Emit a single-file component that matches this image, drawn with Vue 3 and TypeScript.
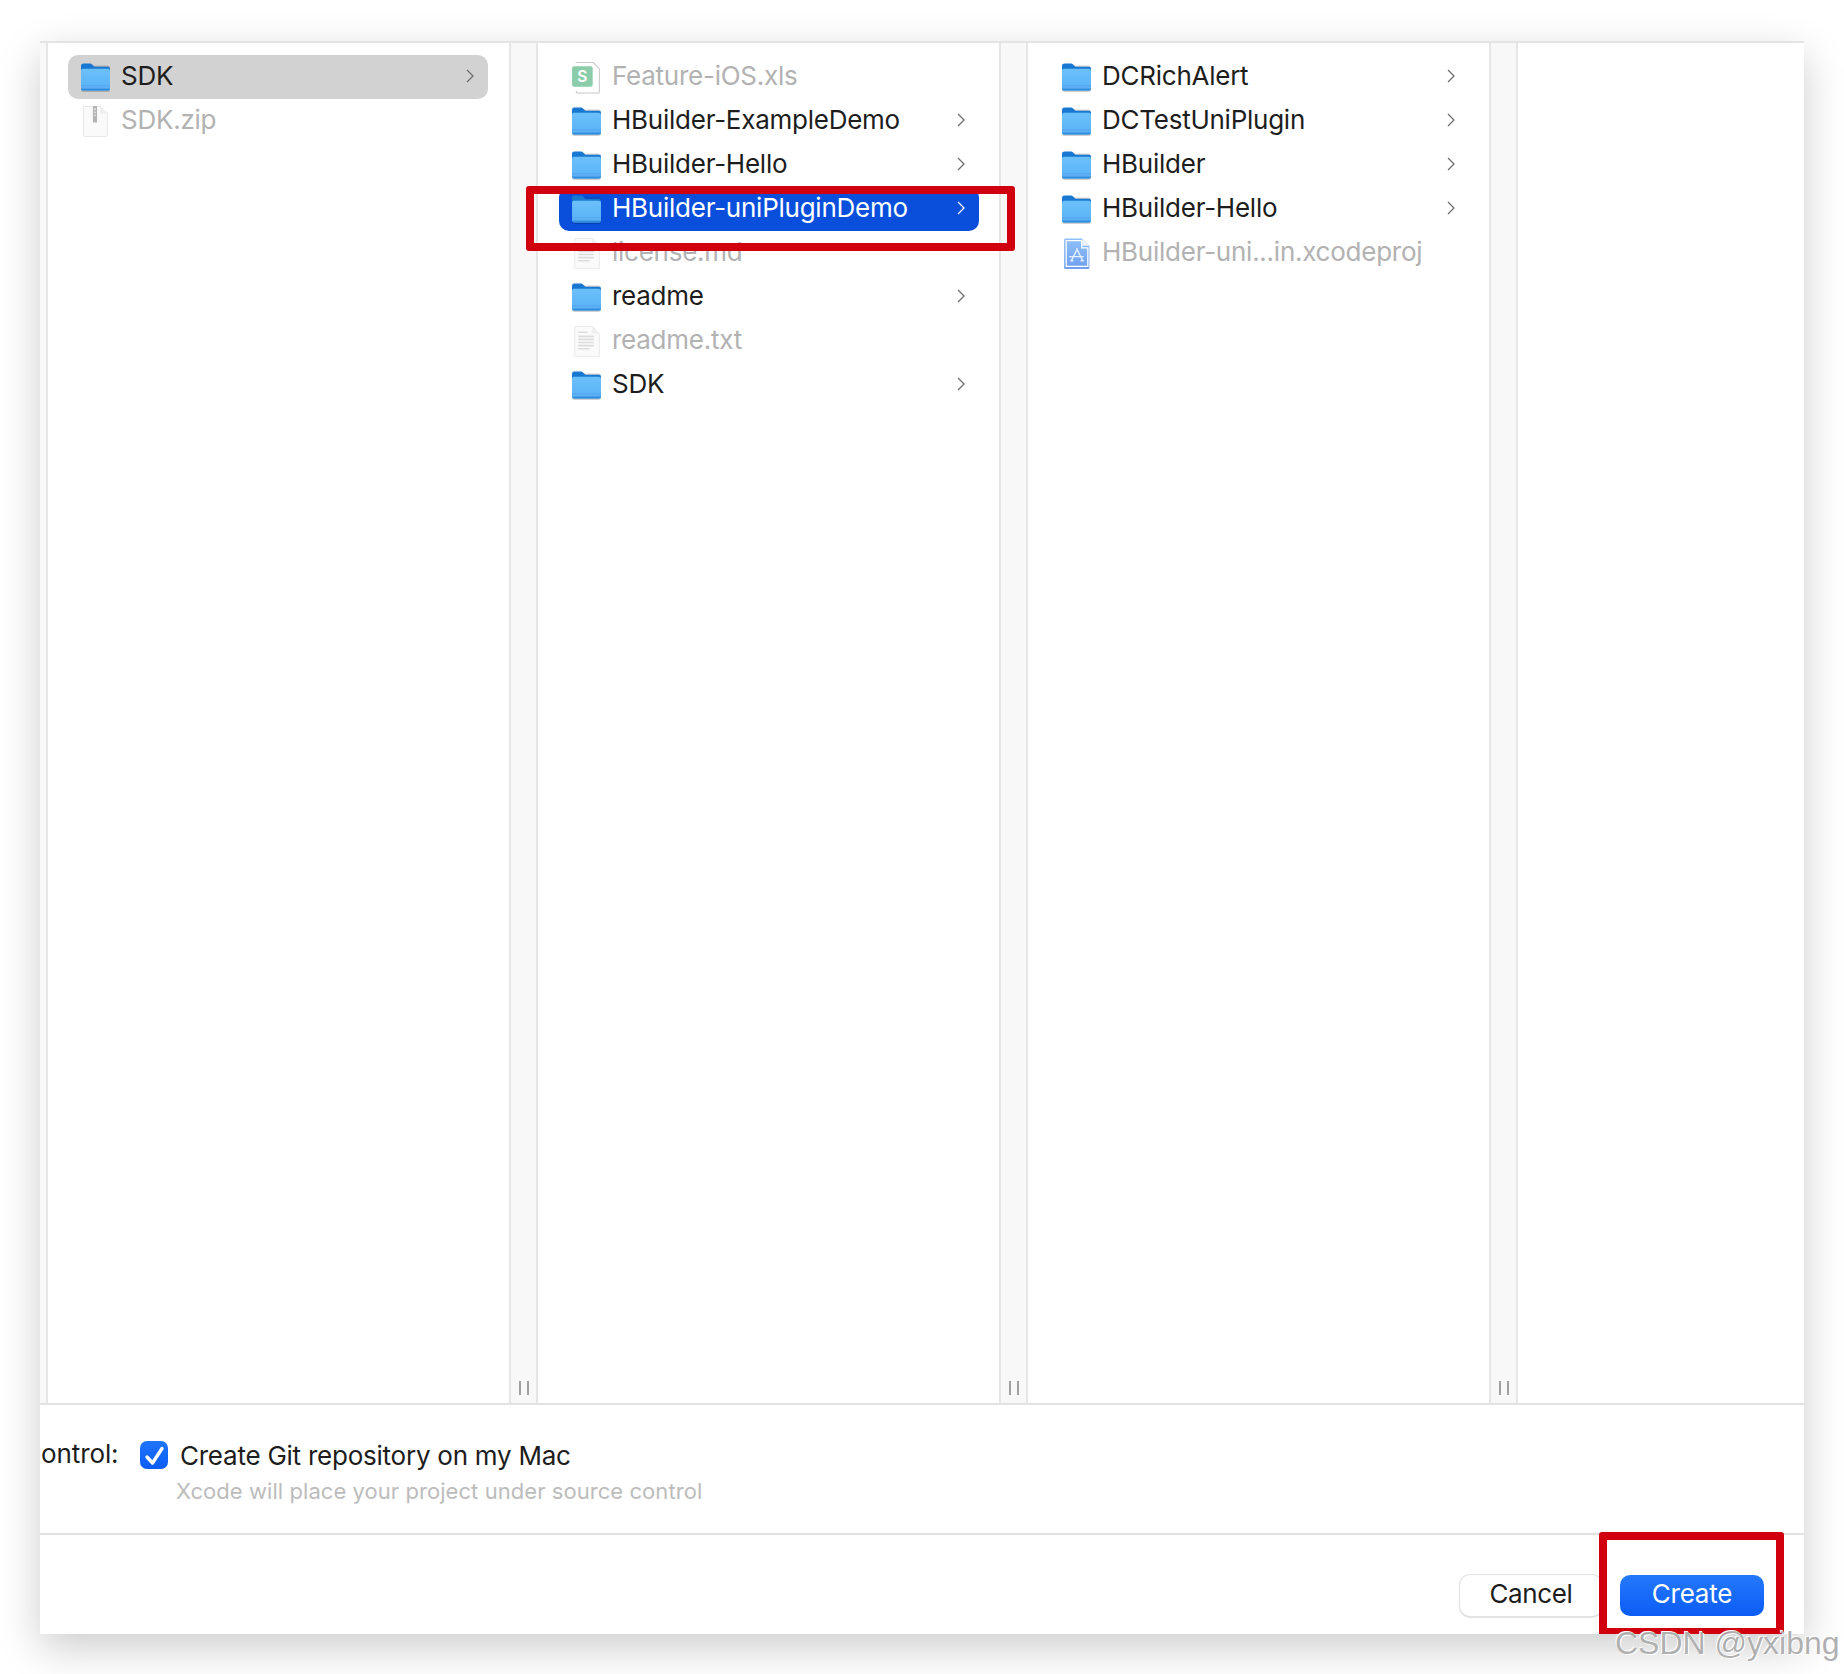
<script setup lang="ts">
interface Row {
  name: string
  icon: string
  dir?: boolean
  state?: 'gray' | 'blue'
}

const columns: Row[][] = [
  [
    { name: 'SDK', icon: 'folder', dir: true, state: 'gray' },
    { name: 'SDK.zip', icon: 'zip' },
  ],
  [
    { name: 'Feature-iOS.xls', icon: 'xls' },
    { name: 'HBuilder-ExampleDemo', icon: 'folder', dir: true },
    { name: 'HBuilder-Hello', icon: 'folder', dir: true },
    { name: 'HBuilder-uniPluginDemo', icon: 'folder', dir: true, state: 'blue' },
    { name: 'license.md', icon: 'doc' },
    { name: 'readme', icon: 'folder', dir: true },
    { name: 'readme.txt', icon: 'doc' },
    { name: 'SDK', icon: 'folder', dir: true },
  ],
  [
    { name: 'DCRichAlert', icon: 'folder', dir: true },
    { name: 'DCTestUniPlugin', icon: 'folder', dir: true },
    { name: 'HBuilder', icon: 'folder', dir: true },
    { name: 'HBuilder-Hello', icon: 'folder', dir: true },
    { name: 'HBuilder-uni...in.xcodeproj', icon: 'proj' },
  ],
]
</script>

<template>
  <div class="page">
    <svg class="defs" width="0" height="0" aria-hidden="true">
      <defs>
        <linearGradient id="fbody" x1="0" y1="0" x2="0" y2="1">
          <stop offset="0" stop-color="#6cc0fb" />
          <stop offset="1" stop-color="#58b2f6" />
        </linearGradient>
        <linearGradient id="ptick" x1="0" y1="0" x2="0" y2="1">
          <stop offset="0" stop-color="#8fc0f6" />
          <stop offset="1" stop-color="#6f9ff0" />
        </linearGradient>
        <symbol id="folder" viewBox="0 0 30 29">
          <rect x="1" y="3" width="28" height="25.500" rx="2" fill="#000" opacity=".18" />
          <path d="M1 3.200C1 1.900 1.900 1 3.200 1h6.600c.8 0 1.300.3 1.900.8L13.900 4H27c1.200 0 2 .8 2 2v4H1z" fill="#1877d1" />
          <path d="M1 8c0-1.200.8-2 2-2h24c1.200 0 2 .8 2 2v17.200c0 1-.8 1.800-1.800 1.800H2.800C1.800 27 1 26.200 1 25.200z" fill="url(#fbody)" />
          <path d="M1 22h28v3.400H1z" fill="#4fa8ef" />
          <path d="M1 23.700h28" stroke="#73bdf6" stroke-width=".7" />
          <path d="M1 25.400h28c0 1-.8 1.600-1.800 1.600H2.800c-1 0-1.800-.6-1.800-1.600z" fill="#2f8bdb" />
        </symbol>
        <symbol id="zip" viewBox="0 0 30 32">
          <path d="M3.500 1.500h16l7 7v20.500c0 1-.6 1.500-1.500 1.500H5c-1 0-1.500-.5-1.500-1.500z" fill="#fafafa" stroke="#e9e9e9" />
          <path d="M19.500 1.500v7h7z" fill="#efefef" />
          <rect x="12.500" y="1" width="4" height="16" fill="#b4b4b4" />
          <path d="M13.500 4h2M13.500 7h2M13.500 10h2" stroke="#eee" />
        </symbol>
        <symbol id="xls" viewBox="0 0 30 32">
          <path d="M4.500 1.500h17l6 6v21.500c0 1.200-.8 2-2 2H7c-1.200 0-2-.8-2-2" fill="#fff" stroke="#c8c8c8" />
          <rect x="1" y="5" width="20" height="20" rx="2" fill="#8bcdab" />
          <text x="11" y="20" text-anchor="middle" class="sym-s">S</text>
        </symbol>
        <symbol id="doc" viewBox="0 0 30 32">
          <path d="M3.500 1.500h17l7 7v20.500c0 1-.6 1.500-1.500 1.500H5c-1 0-1.500-.5-1.500-1.500z" fill="#fafafa" stroke="#ececec" />
          <path d="M20.500 1.500v7h7z" fill="#efefef" />
          <path d="M7 7h9M7 11h15M7 14h15M7 17h15M7 20h15M7 23h11" stroke="#dcdcdc" stroke-width="1.600" />
        </symbol>
        <symbol id="proj" viewBox="0 0 30 32">
          <path d="M3 3c0-1 .6-1.500 1.500-1.500h16l7 7v21c0 1-.6 1.500-1.500 1.500H4.500c-1 0-1.500-.5-1.500-1.500z" fill="url(#ptick)" />
          <path d="M5 3.500h15v7h6v18H5z" fill="none" stroke="#fff" stroke-width="1.200" />
          <path d="M20.500 1.500v7h7z" fill="#eef3fb" />
          <path d="M10 23l6-12M21 23l-6-12M8 19h14M9 23h3M19 23h3" fill="none" stroke="#e6f0ff" stroke-width="1.300" />
        </symbol>
      </defs>
    </svg>

    <div class="window">
      <div class="browser">
        <div class="stub" />
        <template v-for="(col, c) in columns" :key="c">
          <div class="column" :class="{ first: c === 0 }">
            <div v-for="row in col" :key="row.name" class="row" :class="row.state">
              <svg class="icon"><use :href="'#' + row.icon" /></svg>
              <span class="name" :class="{ dim: !row.dir }">{{ row.name }}</span>
              <svg v-if="row.dir" class="chev" viewBox="0 0 8 14">
                <path d="M1 1l6 6-6 6" fill="none" stroke="currentColor" stroke-width="1.300" />
              </svg>
            </div>
          </div>
          <div class="divider"><span class="grip" /></div>
        </template>
        <div class="empty" />
      </div>

      <div class="source">
        <span class="label">ontrol:</span>
        <div class="opt">
          <div class="check-row">
            <span class="checkbox">
              <svg viewBox="0 0 28 28" class="tick">
                <path d="M7 16l5.500 6L22 7.500" fill="none" stroke="#fff" stroke-width="3.400" stroke-linecap="round" stroke-linejoin="round" />
              </svg>
            </span>
            <span class="opt-title">Create Git repository on my Mac</span>
          </div>
          <div class="opt-sub">Xcode will place your project under source control</div>
        </div>
      </div>

      <div class="footer">
        <button class="btn cancel">Cancel</button>
        <button class="btn create">Create</button>
      </div>

      <div class="mark mark-a" />
      <div class="mark mark-b" />
    </div>
    <div class="watermark">CSDN @yxibng</div>
  </div>
</template>

<style>
html, body { margin: 0; background: #fff; }
</style>

<style scoped>
.page {
  position: relative;
  width: 1844px;
  height: 1674px;
  box-sizing: border-box;
  padding: 41px 40px 40px 40px;
  overflow: hidden;
  font-family: Inter, "Liberation Sans", sans-serif;
  color: #1d1d1d;
}
.defs { position: absolute; }
.sym-s { font: 600 15px Inter, sans-serif; fill: #fff; }
.window {
  position: relative;
  height: 100%;
  display: flex;
  flex-direction: column;
  background: #fff;
  box-shadow: 0 14px 40px rgba(0, 0, 0, .2);
}
.browser {
  height: 1364px;
  box-sizing: border-box;
  display: flex;
  border-top: 2px solid #e4e4e4;
  border-bottom: 2px solid #e2e2e2;
}
.stub {
  width: 6px;
  background: #f8f8f8;
  border-right: 2px solid #e6e6e6;
}
.column {
  width: 461px;
  box-sizing: border-box;
  padding: 12px 20px 0 21px;
}
.column.first { padding: 12px 21px 0 20px; }
.row {
  height: 44px;
  box-sizing: border-box;
  display: flex;
  align-items: center;
  padding: 0 14px 0 12px;
  border-radius: 10px;
}
.row.gray { background: #d2d2d2; }
.row.blue { background: #0a4fdc; color: #fff; }
.icon { width: 31px; height: 33px; flex: none; }
.name {
  margin-left: 10px;
  padding-bottom: 4px;
  flex: 1;
  font-size: 26px;
  letter-spacing: -.25px;
  white-space: nowrap;
}
.name.dim { color: #b2b2b2; }
.chev { width: 8px; height: 14px; margin-bottom: 2px; color: #6f6f6f; flex: none; }
.blue .chev { color: #fff; }
.divider {
  width: 29px;
  box-sizing: border-box;
  display: flex;
  justify-content: center;
  align-items: flex-end;
  padding-bottom: 8px;
  background: #f8f8f8;
  border-left: 2px solid #e6e6e6;
  border-right: 2px solid #e6e6e6;
}
.grip {
  width: 10px;
  height: 14px;
  box-sizing: border-box;
  border-left: 2px solid #a0a0a0;
  border-right: 2px solid #a0a0a0;
}
.empty { flex: 1; }
.source {
  height: 130px;
  box-sizing: border-box;
  flex: none;
  display: flex;
  border-bottom: 2px solid #e2e2e2;
  padding-top: 34px;
}
.label {
  width: 100px;
  box-sizing: border-box;
  padding-left: 1px;
  font-size: 26px;
  letter-spacing: -.1px;
  line-height: 30px;
}
.check-row { display: flex; align-items: center; }
.checkbox {
  width: 28px;
  height: 28px;
  border-radius: 7px;
  background: linear-gradient(#1f74fb, #0c5cf5);
  flex: none;
  display: flex;
}
.tick { width: 28px; height: 28px; }
.opt-title {
  margin-left: 12px;
  padding-top: 2px;
  font-size: 26px;
  letter-spacing: -.24px;
  line-height: 30px;
}
.opt-sub {
  margin: 3px 0 0 36px;
  font-size: 22px;
  color: #bcbcbc;
  letter-spacing: .06px;
  line-height: 34px;
}
.footer {
  flex: 1;
  display: flex;
  justify-content: flex-end;
  align-items: flex-start;
  gap: 18px;
  padding: 40px 40px 0 0;
}
.btn {
  height: 41px;
  box-sizing: border-box;
  border-radius: 10px;
  border: 0;
  padding: 0 0 4px;
  font: 400 26px Inter, sans-serif;
}
.cancel {
  width: 142px;
  background: #fff;
  color: #1d1d1d;
  letter-spacing: -.35px;
  box-shadow: 0 0 0 1px #e2e2e2, 0 1px 2px rgba(0, 0, 0, .35);
}
.create {
  width: 144px;
  background: linear-gradient(#2479fb, #0c5cf6);
  color: #fff;
  letter-spacing: -.2px;
}
.mark {
  position: absolute;
  box-sizing: border-box;
  border: 8px solid #d0000f;
  border-radius: 3px;
}
.mark-a { left: 486px; top: 145px; width: 489px; height: 65px; }
.mark-b { left: 1559px; top: 1491px; width: 185px; height: 102px; border-bottom-width: 6px; border-radius: 3px 3px 0 0; }
.watermark {
  position: absolute;
  left: 1615px;
  top: 1623px;
  font: 32px "Liberation Sans", sans-serif;
  line-height: 40px;
  white-space: nowrap;
  color: rgba(150, 150, 150, .75);
  text-shadow: 1px 1px 0 #fff, -1px -1px 0 #fff;
}
</style>
